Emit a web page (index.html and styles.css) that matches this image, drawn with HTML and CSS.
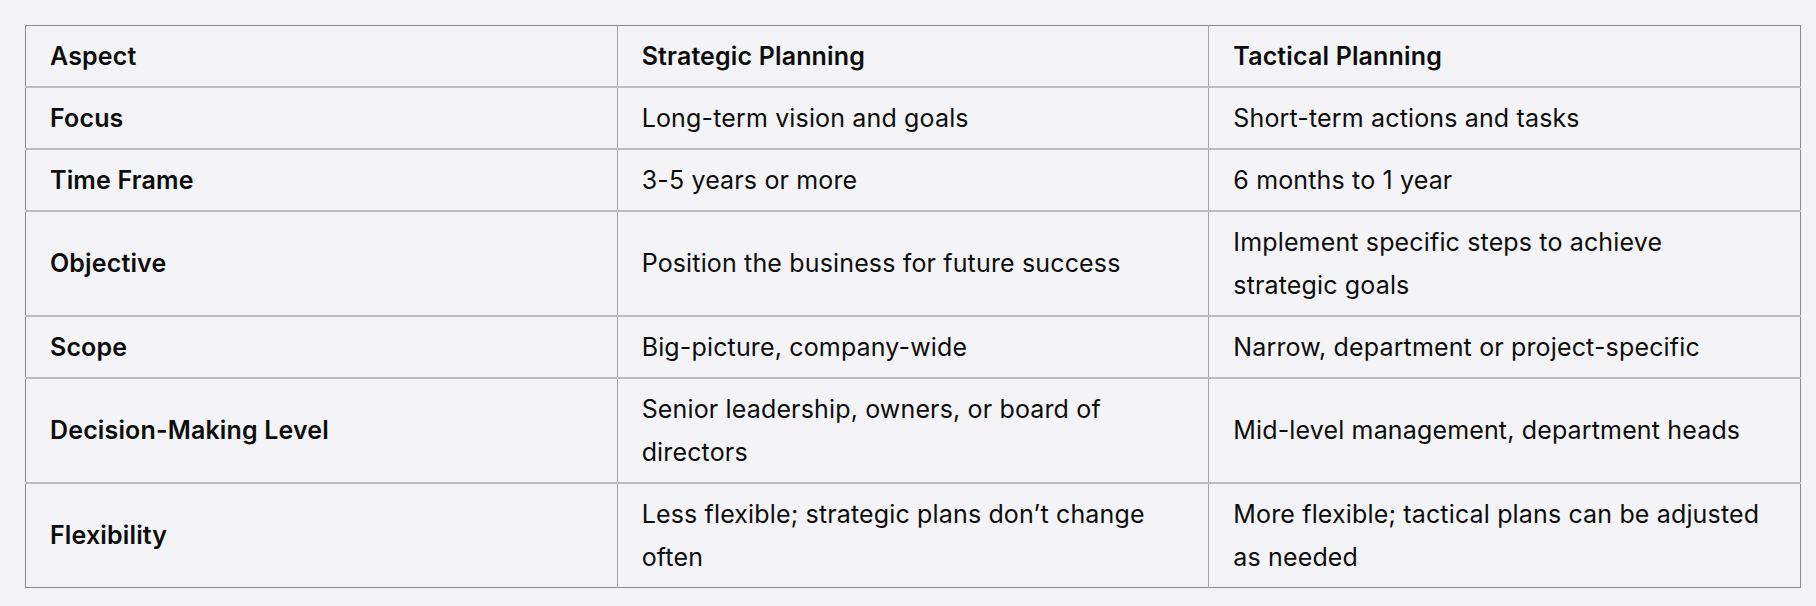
FILE: index.html
```html
<!DOCTYPE html>
<html lang="en">
<head>
<meta charset="utf-8">
<title>Strategic vs Tactical Planning</title>
<link rel="stylesheet" href="styles.css">
</head>
<body>
<div class="page">
  <table class="compare">
    <thead>
      <tr><th>Aspect</th><th>Strategic Planning</th><th>Tactical Planning</th></tr>
    </thead>
    <tbody>
      <tr><td class="key">Focus</td><td>Long-term vision and goals</td><td>Short-term actions and tasks</td></tr>
      <tr><td class="key">Time Frame</td><td>3-5 years or more</td><td>6 months to 1 year</td></tr>
      <tr><td class="key">Objective</td><td>Position the business for future success</td><td>Implement specific steps to achieve strategic goals</td></tr>
      <tr><td class="key">Scope</td><td>Big-picture, company-wide</td><td>Narrow, department or project-specific</td></tr>
      <tr><td class="key">Decision-Making Level</td><td>Senior leadership, owners, or board of directors</td><td>Mid-level management, department heads</td></tr>
      <tr><td class="key">Flexibility</td><td>Less flexible; strategic plans don’t change often</td><td>More flexible; tactical plans can be adjusted as needed</td></tr>
    </tbody>
  </table>
</div>
</body>
</html>
```
FILE: styles.css
```css
html, body {
  margin: 0;
  padding: 0;
  background: #f4f4f6;
}
body {
  font-family: Inter, "Noto Sans", "Liberation Sans", sans-serif;
  color: #0d0d0d;
}
.page {
  padding: 25px 15px 0 25px;
}
.compare {
  width: 1776px;
  table-layout: fixed;
  border-collapse: collapse;
  border: 1px solid #8a8a8c;
  font-size: 25px;
  letter-spacing: 0.15px;
  line-height: 43px;
}
.compare th,
.compare td {
  padding: 8.5px 28px 8.5px 24px;
  text-align: left;
  vertical-align: middle;
  border-left: 1px solid #a4a4a6;
  border-bottom: 2px solid #bdbdbf;
}
.compare th:first-child,
.compare td:first-child {
  border-left: none;
}
.compare tbody tr:last-child td {
  border-bottom: none;
}
.compare th,
.compare td.key {
  font-weight: 600;
}
```
